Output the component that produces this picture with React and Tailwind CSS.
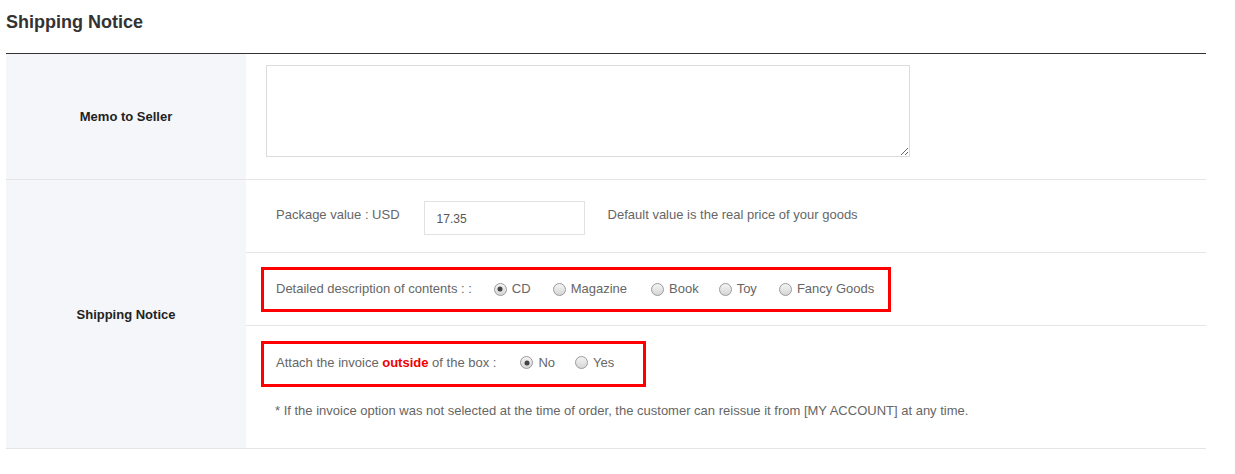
import React from "react";

function Radio({ checked }) {
  return (
    <span className="relative inline-block w-[13px] h-[13px] rounded-full border border-[#9a9a9a] bg-gradient-to-b from-[#f4f4f4] to-[#d6d6d6] shrink-0">
      {checked && (
        <span className="absolute left-1/2 top-1/2 -translate-x-1/2 -translate-y-1/2 w-[5px] h-[5px] rounded-full bg-[#444]" />
      )}
    </span>
  );
}

function Option({ label, checked, mr = "mr-[23px]" }) {
  return (
    <span className={`inline-flex items-center ${mr}`}>
      <Radio checked={checked} />
      <span className="ml-[5px]">{label}</span>
    </span>
  );
}

export default function App() {
  return (
    <div className="w-[1235px] h-[474px] bg-white text-[13px] text-[#666]" style={{ fontFamily: '"Liberation Sans", Arial, sans-serif' }}>
      <div className="ml-[6px] w-[1200px]">
        <div className="h-[54px] border-b border-[#333] flex items-start pt-[12px]">
          <h2 className="text-[18px] font-bold text-[#333] leading-[20px]">Shipping Notice</h2>
        </div>
        {/* Row 1 */}
        <div className="flex border-b border-[#e5e5e5]">
          <div className="w-[240px] bg-[#f5f6fa] flex items-center justify-center font-bold text-[#222]">
            Memo to Seller
          </div>
          <div className="flex-1 pl-[20px] pt-[11px] pb-[22px]">
            <textarea className="block w-[644px] h-[92px] border border-[#dcdcdc] outline-none" />
          </div>
        </div>
        {/* Row 2 */}
        <div className="flex border-b border-[#e5e5e5]">
          <div className="w-[240px] bg-[#f5f6fa] flex items-center justify-center font-bold text-[#222] pt-[2px]">
            Shipping Notice
          </div>
          <div className="flex-1">
            <div className="h-[73px] border-b border-[#e5e5e5] flex items-start pt-[21px] pl-[30px]">
              <span className="mt-[6px] leading-[16px]">Package value : USD</span>
              <div className="ml-[24px] w-[161px] h-[34px] border border-[#e1e1e1] flex items-center pl-[12px] text-[12px] text-[#555] pt-[1px]">
                17.35
              </div>
              <span className="ml-[23px] mt-[6px] leading-[16px]">Default value is the real price of your goods</span>
            </div>
            <div className="h-[73px] border-b border-[#e5e5e5] flex items-center pl-[15px]">
              <div className="h-[45px] border-[3px] border-[#ff0000] flex items-center pl-[12px] pr-[14px]">
                <span className="mr-[22px]">Detailed description of contents : :</span>
                <Option label="CD" checked mr="mr-[22px]" />
                <Option label="Magazine" mr="mr-[24px]" />
                <Option label="Book" mr="mr-[20px]" />
                <Option label="Toy" mr="mr-[22px]" />
                <Option label="Fancy Goods" mr="mr-0" />
              </div>
            </div>
            <div className="pt-[15px] pb-[29px]">
              <div className="ml-[15px] inline-flex h-[46px] w-[385px] border-[3px] border-[#ff0000] items-center pl-[12px] pb-[3px]">
                <span className="mr-[24px]">
                  Attach the invoice <b className="text-[#ee0000]">outside</b> of the box :
                </span>
                <Option label="No" checked mr="mr-[20px]" />
                <Option label="Yes" mr="mr-0" />
              </div>
              <p className="pl-[29px] mt-[16px] leading-[16px]">
                * If the invoice option was not selected at the time of order, the customer can reissue it from [MY ACCOUNT] at any time.
              </p>
            </div>
          </div>
        </div>
      </div>
    </div>
  );
}
